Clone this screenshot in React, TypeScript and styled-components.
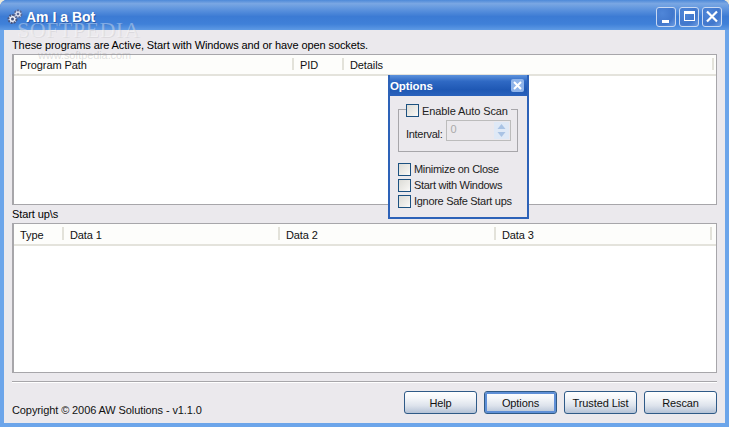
import React from "react";
import styled, { createGlobalStyle } from "styled-components";

const Global = createGlobalStyle`
  html, body { margin: 0; padding: 0; background: #ece9d8; }
  body { font-family: "Liberation Sans", Arial, sans-serif; font-size: 11px; letter-spacing: -0.1px; color: #000; }
  #root { width: 729px; height: 427px; overflow: hidden; }
`;

const Win = styled.div`
  position: relative;
  width: 729px;
  height: 427px;
  box-sizing: border-box;
  display: flex;
  flex-direction: column;
  background: #0b5be0;
  border-radius: 7px 7px 0 0;
  overflow: hidden;
`;
const TitleBar = styled.div`
  height: 30px;
  flex: none;
  box-sizing: border-box;
  padding: 4px 7px 0 7px;
  display: flex;
  align-items: center;
  gap: 3px;
  background: linear-gradient(180deg, #4d89d8 0%, #7aa7e3 12%, #5f95de 30%, #3c7bd4 55%, #3f80d8 80%, #5e9ae4 100%);
`;
const TitleText = styled.span`
  flex: 1;
  font: bold 14px "Liberation Sans", sans-serif;
  color: #fff;
  letter-spacing: 0;
  text-shadow: 1px 1px 0 #2a5aa8;
`;
const CapButtons = styled.div`
  display: flex;
  gap: 3px;
  margin-top: -1px;
`;
const CapButton = styled.div`
  width: 20px;
  height: 20px;
  box-sizing: border-box;
  border: 1px solid #c9d9f2;
  border-radius: 3px;
  background: radial-gradient(circle at 30% 30%, #4f86d8 0%, #4177cc 60%, #6f9fe4 100%);
  display: flex;
  align-items: center;
  justify-content: center;
`;
const Frame = styled.div`
  flex: 1;
  display: flex;
  background: #6ca5ea;
  min-height: 0;
`;
const Client = styled.div`
  flex: 1;
  margin: 0 4px 4px;
  background: #ebe9ed;
  padding: 8px 8px 0;
  display: flex;
  flex-direction: column;
  min-height: 0;
`;
const Caption = styled.div`
  height: 16px;
  line-height: 14px;
  flex: none;
`;
const ListBox = styled.div<{ $h: number }>`
  height: ${(p) => p.$h}px;
  flex: none;
  box-sizing: border-box;
  border: 2px solid #a7a6aa;
  border-width: 1px 1px 1px 2px;
  background: #fff;
`;
const ListHead = styled.div<{ $h: number; $line: number }>`
  height: ${(p) => p.$h}px;
  box-sizing: border-box;
  border-bottom: 2px solid #e4e3dc;
  display: flex;
  background: #fdfdfb;
  line-height: ${(p) => p.$line}px;
`;
const Col = styled.div<{ $w: number }>`
  width: ${(p) => p.$w}px;
  box-sizing: border-box;
  flex: none;
  padding-left: 6px;
  color: #111;
  position: relative;
  &::after {
    content: "";
    position: absolute;
    right: 0;
    top: 3px;
    bottom: 4px;
    width: 2px;
    background: #e3e2da;
  }
`;
const StartCaption = styled(Caption)`
  margin-top: 2px;
`;
const Divider = styled.div`
  height: 0;
  flex: none;
  margin-top: 8px;
  border-top: 1px solid #a7a6aa;
  border-bottom: 1px solid #fff;
`;
const Footer = styled.div`
  flex: 1;
  display: flex;
  align-items: flex-start;
  justify-content: space-between;
`;
const Copy = styled.div`
  margin-top: 21px;
  color: #111;
`;
const Buttons = styled.div`
  display: flex;
  gap: 7px;
  margin-top: 8px;
`;
const Btn = styled.div<{ $def?: boolean }>`
  width: 73px;
  height: 23px;
  box-sizing: border-box;
  border: 1px solid #2f5a87;
  border-radius: 3px;
  background: linear-gradient(180deg, #ffffff 0%, #f4f6f9 30%, #dde3ec 65%, #b5c2d6 100%);
  box-shadow: ${(p) => (p.$def ? "inset 0 0 0 2px #5f8fd6" : "none")};
  display: flex;
  align-items: center;
  justify-content: center;
  color: #111;
`;
const Dialog = styled.div`
  position: absolute;
  left: 388px;
  top: 75px;
  width: 141px;
  height: 144px;
  box-sizing: border-box;
  border: 2px solid #2d62b8;
  border-top: 0;
  background: #ebe9ed;
  display: flex;
  flex-direction: column;
`;
const DlgTitle = styled.div`
  height: 21px;
  flex: none;
  box-sizing: border-box;
  padding: 0 3px 0 0;
  display: flex;
  align-items: center;
  justify-content: space-between;
  background: linear-gradient(180deg, #5d92dc 0%, #2f69c4 30%, #1f58b4 70%, #2a62bc 100%);
  font: bold 11.5px "Liberation Sans", sans-serif;
  color: #fff;
`;
const DlgClose = styled.div`
  width: 13px;
  height: 13px;
  background: #8fb4ea;
  border-radius: 2px;
  display: flex;
  align-items: center;
  justify-content: center;
`;
const DlgBody = styled.div`
  padding: 13px 8px 0 8px;
  display: flex;
  flex-direction: column;
`;
const Group = styled.div`
  position: relative;
  height: 43px;
  width: 120px;
  box-sizing: border-box;
  border: 1px solid #a7a6aa;
  padding: 10px 0 0 7px;
  display: flex;
  align-items: flex-start;
  gap: 4px;
`;
const Legend = styled.label`
  position: absolute;
  left: 7px;
  top: -6px;
  padding: 0 3px 0 0;
  background: #ebe9ed;
  display: flex;
  align-items: center;
  gap: 3px;
  color: #222;
  white-space: nowrap;
`;
const Box = styled.span`
  width: 13px;
  height: 13px;
  box-sizing: border-box;
  flex: none;
  border: 1px solid #1c5180;
  background: linear-gradient(135deg, #dcdcd7 0%, #f0efec 70%, #fbfbfa 100%);
`;
const Label = styled.span`
  color: #222;
  letter-spacing: -0.3px;
  white-space: nowrap;
`;
const IntervalLabel = styled(Label)`
  margin-top: 8px;
`;
const Spin = styled.div`
  width: 65px;
  height: 21px;
  flex: none;
  box-sizing: border-box;
  border: 1px solid #bcbcbc;
  background: #ebe9ed;
  display: flex;
  justify-content: space-between;
  align-items: stretch;
  color: #aaa;
  padding: 1px 1px 1px 3px;
  line-height: 14px;
`;
const SpinArrows = styled.div`
  width: 15px;
  display: flex;
  flex-direction: column;
  background: #dfe9f6;
  align-items: center;
  justify-content: space-around;
`;
const Check = styled.div`
  display: flex;
  align-items: center;
  gap: 3px;
  height: 16px;
`;
const Checks = styled.div`
  margin-top: 9px;
  display: flex;
  flex-direction: column;
`;
const Watermark = styled.div`
  position: absolute;
  left: 17px;
  top: 17px;
  font: 22px "Liberation Serif", serif;
  letter-spacing: 0.5px;
  color: rgba(255, 255, 255, 0.35);
  text-shadow: 1px 1px 0 rgba(120, 120, 120, 0.12);
  pointer-events: none;
  line-height: 26px;
`;
const Watermark2 = styled.div`
  position: absolute;
  left: 38px;
  top: 49px;
  font: 11px "Liberation Sans", sans-serif;
  color: rgba(150, 150, 150, 0.3);
  pointer-events: none;
`;

const Gears = () => (
  <svg width="16" height="16" viewBox="0 0 16 16">
    <circle cx="5.500" cy="10" r="4" fill="#eceef6" stroke="#47557f" strokeWidth="2" strokeDasharray="2 1" />
    <circle cx="5.500" cy="10" r="1.500" fill="#47557f" />
    <circle cx="11" cy="5" r="3.500" fill="#dfe3f0" stroke="#5a6a98" strokeWidth="1.800" strokeDasharray="2 1" />
    <circle cx="11" cy="5" r="1.300" fill="#5a6a98" />
  </svg>
);

export default function App() {
  return (
    <Win>
      <Global />
      <TitleBar>
        <Gears />
        <TitleText>Am I a Bot</TitleText>
        <CapButtons>
          <CapButton>
            <svg width="14" height="14" viewBox="0 0 14 14">
              <rect x="3" y="10" width="7" height="3" fill="#fff" />
            </svg>
          </CapButton>
          <CapButton>
            <svg width="14" height="14" viewBox="0 0 14 14">
              <rect x="2" y="1" width="11" height="3" fill="#fff" />
              <rect x="2.500" y="1.500" width="10" height="9" fill="none" stroke="#fff" />
            </svg>
          </CapButton>
          <CapButton>
            <svg width="14" height="14" viewBox="0 0 14 14">
              <path d="M2 1.500l10 10M12 1.500l-10 10" stroke="#fff" strokeWidth="2.200" />
            </svg>
          </CapButton>
        </CapButtons>
      </TitleBar>
      <Frame>
        <Client>
          <Caption>These programs are Active, Start with Windows and or have open sockets.</Caption>
          <ListBox $h={151}>
            <ListHead $h={21} $line={20}>
              <Col $w={280}>Program Path</Col>
              <Col $w={50}>PID</Col>
              <Col $w={370}>Details</Col>
            </ListHead>
          </ListBox>
          <StartCaption>Start up\s</StartCaption>
          <ListBox $h={150}>
            <ListHead $h={22} $line={23}>
              <Col $w={50}>Type</Col>
              <Col $w={216}>Data 1</Col>
              <Col $w={216}>Data 2</Col>
              <Col $w={216}>Data 3</Col>
            </ListHead>
          </ListBox>
          <Divider />
          <Footer>
            <Copy>Copyright © 2006 AW Solutions - v1.1.0</Copy>
            <Buttons>
              <Btn>Help</Btn>
              <Btn $def>Options</Btn>
              <Btn>Trusted List</Btn>
              <Btn>Rescan</Btn>
            </Buttons>
          </Footer>
        </Client>
      </Frame>
      <Watermark>SOFTPEDIA</Watermark>
      <Watermark2>www.softpedia.com</Watermark2>
      <Dialog>
        <DlgTitle>
          <span>Options</span>
          <DlgClose>
            <svg width="11" height="11" viewBox="0 0 11 11">
              <path d="M2 2l7 7M9 2l-7 7" stroke="#fff" strokeWidth="2" />
            </svg>
          </DlgClose>
        </DlgTitle>
        <DlgBody>
          <Group>
            <Legend>
              <Box />
              Enable Auto Scan
            </Legend>
            <IntervalLabel>Interval:</IntervalLabel>
            <Spin>
              0
              <SpinArrows>
                <svg width="9" height="5" viewBox="0 0 9 5"><path d="M4.500 0l4 5h-8z" fill="#a9c3e4" /></svg>
                <svg width="9" height="5" viewBox="0 0 9 5"><path d="M.5 0h8l-4 5z" fill="#a9c3e4" /></svg>
              </SpinArrows>
            </Spin>
          </Group>
          <Checks>
            <Check><Box /><Label>Minimize on Close</Label></Check>
            <Check><Box /><Label>Start with Windows</Label></Check>
            <Check><Box /><Label>Ignore Safe Start ups</Label></Check>
          </Checks>
        </DlgBody>
      </Dialog>
    </Win>
  );
}
